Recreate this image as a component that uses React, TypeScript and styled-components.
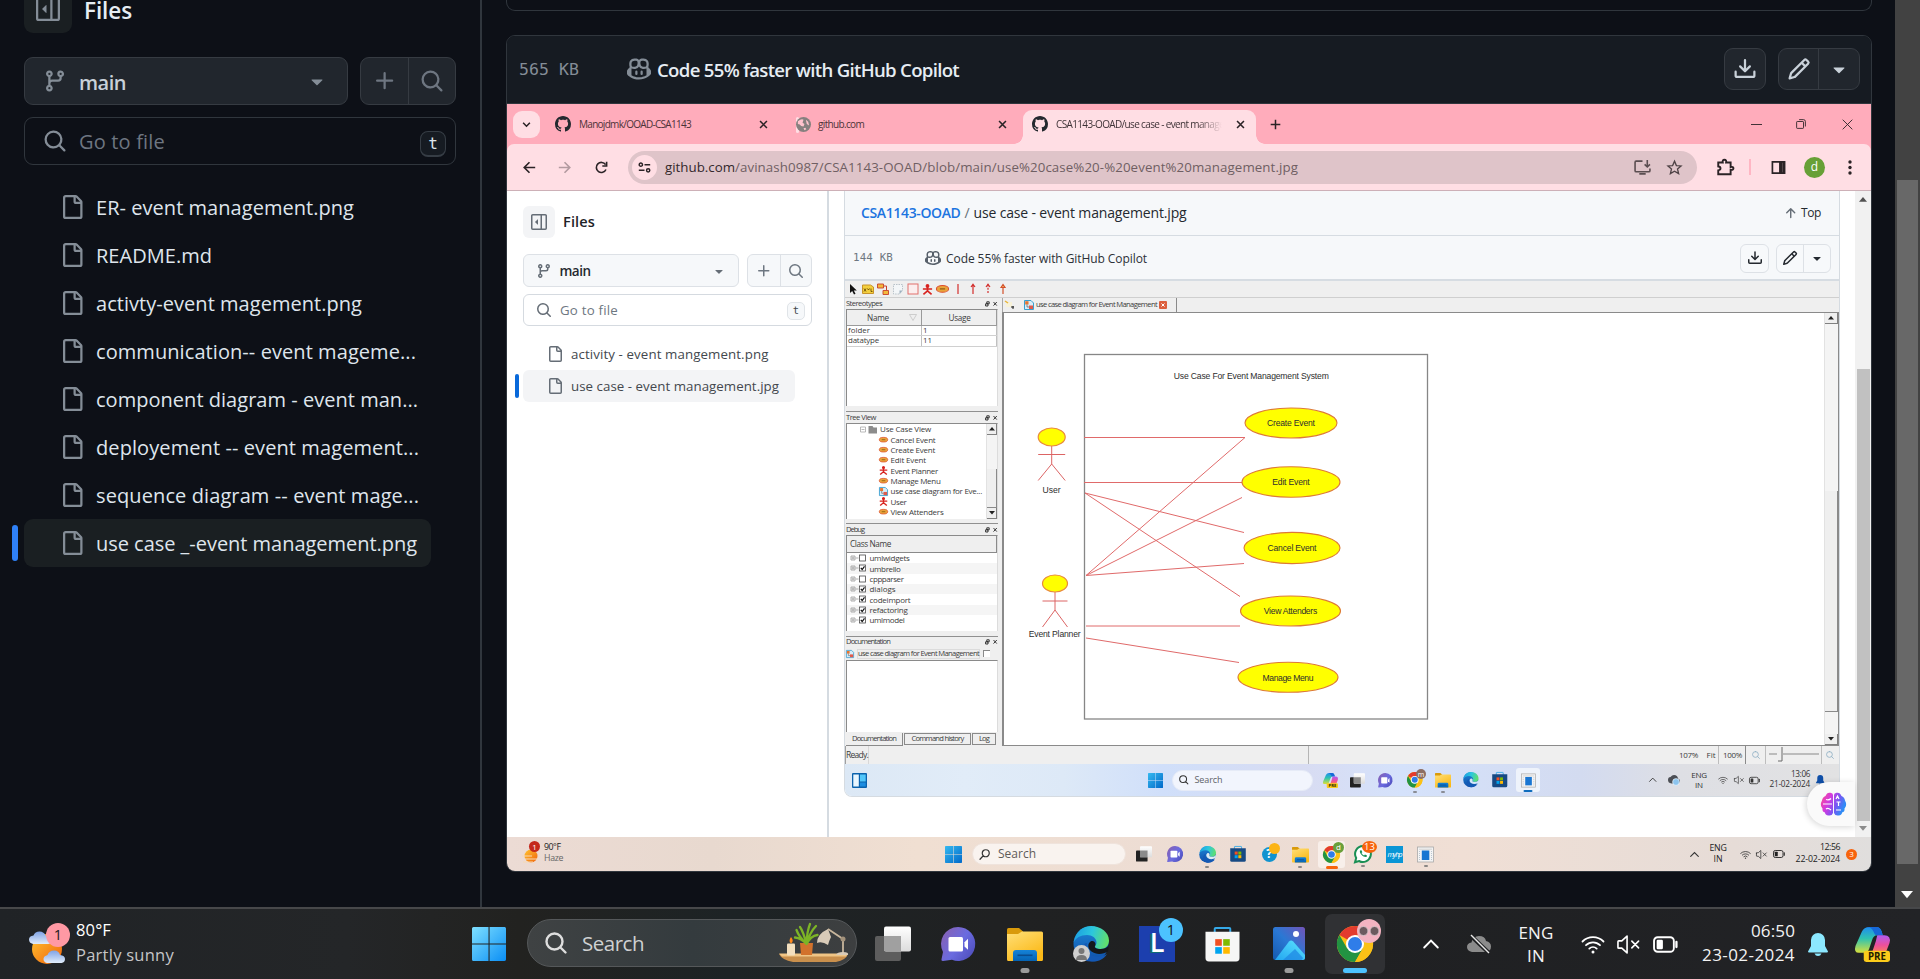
import React, { useLayoutEffect, useRef } from "react";
import styled, { createGlobalStyle, css } from "styled-components";

const UI = `"Open Sans", "Noto Sans", sans-serif`;
const MONO = `"DejaVu Sans Mono", "Liberation Mono", monospace`;

const Global = createGlobalStyle`
  *, *::before, *::after { box-sizing: border-box; }
  html, body { margin: 0; padding: 0; overflow: hidden; background: #0d1017; }
  body { font-family: ${UI}; }
  svg { display: block; flex: none; overflow: visible; }
`;

/* ---------- text ---------- */

interface TextProps { $s: number; $c?: string; $wt?: number; $f?: string; $pt?: number }
const Text = styled.span<TextProps>`
  display: inline-block;
  flex: none;
  white-space: pre;
  line-height: 1.2;
  padding-top: ${(p) => p.$pt || 0}px;
  font-family: ${(p) => p.$f || UI};
  font-size: ${(p) => p.$s}px;
  font-weight: ${(p) => p.$wt || 400};
  color: ${(p) => p.$c || "inherit"};
`;

/* A single line of text whose tracking is adjusted so that it spans w pixels. */
function Fit(props: { w: number; s: number; c?: string; wt?: number; f?: string; pt?: number; children: React.ReactNode }) {
  const ref = useRef<HTMLSpanElement>(null);
  useLayoutEffect(() => {
    const el = ref.current;
    if (!el) return;
    el.style.letterSpacing = "0px";
    const n = (el.textContent || "").length;
    const natural = el.getBoundingClientRect().width;
    if (n > 1) el.style.letterSpacing = `${(props.w - natural) / n}px`;
  });
  return (
    <Text ref={ref} $s={props.s} $c={props.c} $wt={props.wt} $f={props.f} $pt={props.pt}>{props.children}</Text>
  );
}

/* ---------- octicons ---------- */

const OCT: Record<string, string> = {
  file: "M2 1.75C2 .784 2.784 0 3.75 0h6.586c.464 0 .909.184 1.237.513l2.914 2.914c.329.328.513.773.513 1.237v9.586A1.75 1.75 0 0 1 13.25 16h-9.5A1.75 1.75 0 0 1 2 14.25Zm1.75-.25a.25.25 0 0 0-.25.25v12.5c0 .138.112.25.25.25h9.5a.25.25 0 0 0 .25-.25V6h-2.75A1.75 1.75 0 0 1 9 4.25V1.5Zm6.75.062V4.25c0 .138.112.25.25.25h2.688l-.011-.013-2.914-2.914-.013-.011Z",
  search: "M10.68 11.74a6 6 0 0 1-7.922-8.982 6 6 0 0 1 8.982 7.922l3.04 3.04a.749.749 0 0 1-.326 1.275.749.749 0 0 1-.734-.215ZM11.5 7a4.499 4.499 0 1 0-8.997 0A4.499 4.499 0 0 0 11.5 7Z",
  branch: "M9.5 3.25a2.25 2.25 0 1 1 3 2.122V6A2.5 2.5 0 0 1 10 8.5H6a1 1 0 0 0-1 1v1.128a2.251 2.251 0 1 1-1.5 0V5.372a2.25 2.25 0 1 1 1.5 0v1.836A2.493 2.493 0 0 1 6 7h4a1 1 0 0 0 1-1v-.628A2.25 2.25 0 0 1 9.5 3.25Zm-6 0a.75.75 0 1 0 1.5 0 .75.75 0 0 0-1.5 0Zm8.25-.75a.75.75 0 1 0 0 1.5.75.75 0 0 0 0-1.5ZM4.25 12a.75.75 0 1 0 0 1.5.75.75 0 0 0 0-1.5Z",
  plus: "M7.75 2a.75.75 0 0 1 .75.75V7h4.25a.75.75 0 0 1 0 1.5H8.5v4.25a.75.75 0 0 1-1.5 0V8.5H2.75a.75.75 0 0 1 0-1.5H7V2.75A.75.75 0 0 1 7.75 2Z",
  caret: "m4.427 7.427 3.396 3.396a.25.25 0 0 0 .354 0l3.396-3.396A.25.25 0 0 0 11.396 7H4.604a.25.25 0 0 0-.177.427Z",
  download: "M2.75 14A1.75 1.75 0 0 1 1 12.25v-2.5a.75.75 0 0 1 1.5 0v2.5c0 .138.112.25.25.25h10.5a.25.25 0 0 0 .25-.25v-2.5a.75.75 0 0 1 1.5 0v2.5A1.75 1.75 0 0 1 13.25 14ZM7.25 7.689V2a.75.75 0 0 1 1.5 0v5.689l1.97-1.969a.749.749 0 1 1 1.06 1.06l-3.25 3.25a.749.749 0 0 1-1.06 0L4.22 6.78a.749.749 0 1 1 1.06-1.06l1.97 1.969Z",
  pencil: "M11.013 1.427a1.75 1.75 0 0 1 2.474 0l1.086 1.086a1.75 1.75 0 0 1 0 2.474l-8.61 8.61c-.21.21-.47.364-.756.445l-3.251.93a.75.75 0 0 1-.927-.928l.929-3.25c.081-.286.235-.547.445-.758l8.61-8.61Zm.176 4.823L9.75 4.81l-6.286 6.287a.253.253 0 0 0-.064.108l-.558 1.953 1.953-.558a.253.253 0 0 0 .108-.064Zm1.238-3.763a.25.25 0 0 0-.354 0L10.811 3.75l1.439 1.44 1.263-1.263a.25.25 0 0 0 0-.354Z",
  copilot: "M7.998 15.035c-4.562 0-7.873-2.914-7.998-3.749V9.338c.085-.628.677-1.686 1.588-2.065.013-.07.024-.143.036-.218.029-.183.06-.384.126-.612-.201-.508-.254-1.084-.254-1.656 0-.87.128-1.769.693-2.484.579-.733 1.494-1.124 2.724-1.261 1.206-.134 2.262.034 2.944.765.05.053.096.108.139.165.044-.057.094-.112.143-.165.682-.731 1.738-.899 2.944-.765 1.23.137 2.145.528 2.724 1.261.566.715.693 1.614.693 2.484 0 .572-.053 1.148-.254 1.656.066.228.098.429.126.612.012.076.024.148.037.218.924.385 1.522 1.471 1.591 2.095v1.872c0 .766-3.351 3.795-8.002 3.795Zm0-1.485c2.28 0 4.584-1.11 5.002-1.433V7.862l-.023-.116c-.49.21-1.075.291-1.727.291-1.146 0-2.059-.327-2.71-.991A3.222 3.222 0 0 1 8 6.303a3.24 3.24 0 0 1-.544.743c-.65.664-1.563.991-2.71.991-.652 0-1.236-.081-1.727-.291l-.023.116v4.255c.419.323 2.722 1.433 5.002 1.433ZM6.762 2.83c-.193-.206-.637-.413-1.682-.297-1.019.113-1.479.404-1.713.7-.247.312-.369.789-.369 1.554 0 .793.129 1.171.308 1.371.162.181.519.379 1.442.379.853 0 1.339-.235 1.638-.54.315-.322.527-.827.617-1.553.117-.935-.037-1.395-.241-1.614Zm4.155-.297c-1.044-.116-1.488.091-1.681.297-.204.219-.359.679-.242 1.614.091.726.303 1.231.618 1.553.299.305.784.54 1.638.54.922 0 1.28-.198 1.442-.379.179-.2.308-.578.308-1.371 0-.765-.123-1.242-.37-1.554-.233-.296-.693-.587-1.713-.7ZM6.25 9.037a.75.75 0 0 1 .75.75v1.501a.75.75 0 0 1-1.5 0V9.787a.75.75 0 0 1 .75-.75Zm4.25.75v1.501a.75.75 0 0 1-1.5 0V9.787a.75.75 0 0 1 1.5 0Z",
  up: "M3.47 7.78a.75.75 0 0 1 0-1.06l4.25-4.25a.75.75 0 0 1 1.06 0l4.25 4.25a.751.751 0 0 1-.018 1.042.751.751 0 0 1-1.042.018L9 4.81v7.44a.75.75 0 0 1-1.5 0V4.81L4.53 7.78a.75.75 0 0 1-1.06 0Z",
  sidebar: "m4.177 7.823 2.396-2.396A.25.25 0 0 1 7 5.604v4.792a.25.25 0 0 1-.427.177L4.177 8.177a.25.25 0 0 1 0-.354ZM0 1.75C0 .784.784 0 1.75 0h12.5C15.216 0 16 .784 16 1.75v12.5A1.75 1.75 0 0 1 14.25 16H1.75A1.75 1.75 0 0 1 0 14.25Zm1.75-.25a.25.25 0 0 0-.25.25v12.5c0 .138.112.25.25.25H9.5v-13Zm12.5 13a.25.25 0 0 0 .25-.25V1.75a.25.25 0 0 0-.25-.25H11v13Z",
  github: "M8 0c4.42 0 8 3.58 8 8a8.013 8.013 0 0 1-5.45 7.59c-.4.08-.55-.17-.55-.38 0-.27.01-1.13.01-2.2 0-.75-.25-1.23-.54-1.48 1.78-.2 3.65-.88 3.65-3.95 0-.88-.31-1.59-.82-2.15.08-.2.36-1.02-.08-2.12 0 0-.67-.22-2.2.82-.64-.18-1.32-.27-2-.27-.68 0-1.36.09-2 .27-1.53-1.03-2.2-.82-2.2-.82-.44 1.1-.16 1.92-.08 2.12-.51.56-.82 1.28-.82 2.15 0 3.06 1.86 3.75 3.64 3.95-.23.2-.44.55-.51 1.07-.46.21-1.61.55-2.33-.66-.15-.24-.6-.83-1.23-.82-.67.01-.27.38.01.53.34.19.73.9.82 1.13.16.45.68 1.31 2.69.94 0 .67.01 1.3.01 1.49 0 .21-.15.45-.55.38A7.995 7.995 0 0 1 0 8c0-4.42 3.58-8 8-8Z",
};
const Oct = ({ n, s, c }: { n: string; s: number; c: string }) => (
  <svg width={s} height={s} viewBox="0 0 16 16" fill={c}><path d={OCT[n]} /></svg>
);

/* ---------- application icons ---------- */

interface IconProps { s: number }

const Defs = styled.svg`position: absolute;`;
const GradientDefs = () => (
  <Defs width="0" height="0">
    <defs>
      <linearGradient id="gWin" x1="0" y1="0" x2="1" y2="1"><stop offset="0" stopColor="#7fe0ff" /><stop offset="1" stopColor="#0a8ef5" /></linearGradient>
      <linearGradient id="gWinDark" x1="0" y1="0" x2="1" y2="1"><stop offset="0" stopColor="#35b9f0" /><stop offset="1" stopColor="#0169c9" /></linearGradient>
      <linearGradient id="gTeams" x1="0" y1="0.2" x2="1" y2="0.9"><stop offset="0" stopColor="#8661b5" /><stop offset=".5" stopColor="#6a6be0" /><stop offset="1" stopColor="#4c4bb8" /></linearGradient>
      <linearGradient id="gFolder" x1="0" y1="0" x2="0.6" y2="1"><stop offset="0" stopColor="#ffdf78" /><stop offset="1" stopColor="#fbb917" /></linearGradient>
      <linearGradient id="gFolderB" x1="0" y1="0" x2="0" y2="1"><stop offset="0" stopColor="#1583d8" /><stop offset="1" stopColor="#0563b4" /></linearGradient>
      <linearGradient id="gEdgeA" x1="0" y1="0.3" x2="1" y2="0.5"><stop offset="0" stopColor="#1b9de2" /><stop offset=".5" stopColor="#2cc7dd" /><stop offset="1" stopColor="#62e06a" /></linearGradient>
      <linearGradient id="gEdgeB" x1="0" y1="0" x2="0" y2="1"><stop offset="0" stopColor="#1d86d8" /><stop offset="1" stopColor="#0f4fa8" /></linearGradient>
      <linearGradient id="gPhoto" x1="0" y1="1" x2="1" y2="0"><stop offset="0" stopColor="#1559ad" /><stop offset=".5" stopColor="#2a78d4" /><stop offset="1" stopColor="#7254b8" /></linearGradient>
      <linearGradient id="gPhotoB" x1="0" y1="1" x2="1" y2="0"><stop offset="0" stopColor="#23a5f0" /><stop offset="1" stopColor="#5be3ff" /></linearGradient>
      <linearGradient id="gCopA" x1="0" y1="0" x2="0" y2="1"><stop offset="0" stopColor="#1f8df0" /><stop offset=".45" stopColor="#2fc3b0" /><stop offset="1" stopColor="#d8e03c" /></linearGradient>
      <linearGradient id="gCopB" x1="0" y1="0" x2="0" y2="1"><stop offset="0" stopColor="#b05cf2" /><stop offset=".5" stopColor="#ec4f9c" /><stop offset="1" stopColor="#ff8a4a" /></linearGradient>
      <linearGradient id="gBrain" x1="0" y1="0" x2="1" y2="0.4"><stop offset="0" stopColor="#ff4f8c" /><stop offset=".4" stopColor="#d23be0" /><stop offset=".7" stopColor="#7a55f2" /><stop offset="1" stopColor="#2f8cf5" /></linearGradient>
      <linearGradient id="gSun" x1="0" y1="0" x2="1" y2="1"><stop offset="0" stopColor="#ffc430" /><stop offset="1" stopColor="#f0620c" /></linearGradient>
      <linearGradient id="gCloud" x1="0" y1="0" x2="0" y2="1"><stop offset="0" stopColor="#7fa3e6" /><stop offset="1" stopColor="#e0ecfa" /></linearGradient>
      <linearGradient id="gTvFront" x1="0" y1="0" x2="0" y2="1"><stop offset="0" stopColor="#ffffff" /><stop offset="1" stopColor="#dcdcdc" /></linearGradient>
    </defs>
  </Defs>
);

const WinLogo = ({ s, dark }: IconProps & { dark?: boolean }) => (
  <svg width={s} height={s} viewBox="0 0 34 34">
    <path fill={dark ? "url(#gWinDark)" : "url(#gWin)"} d="M1.5 0h15v16.5H0v-15Q0 0 1.5 0ZM17.6 0h15Q34 0 34 1.5v15H17.600ZM0 17.600h16.500V34h-15Q0 34 0 32.500ZM17.600 17.600H34v15Q34 34 32.500 34H17.600Z" />
  </svg>
);
const TaskViewIcon = ({ s, dark }: IconProps & { dark?: boolean }) => (
  <svg width={s} height={s} viewBox="0 0 36 36">
    <rect x="0" y="10" width="26" height="25" rx="2" fill={dark ? "#222" : "#5d5d5d"} />
    <rect x="9" y="0.500" width="27" height="25" rx="2" fill="url(#gTvFront)" />
    <path d="M9 10h17v15.500H11q-2 0-2-2Z" fill={dark ? "#8b8b8b" : "#a0a0a0"} />
  </svg>
);
const TeamsIcon = ({ s }: IconProps) => (
  <svg width={s} height={s} viewBox="0 0 34 34">
    <path d="M17 0a17 17 0 1 1-6 32.800L2 34q-2 .2-1.500-1.800L2 25A17 17 0 0 1 17 0Z" fill="url(#gTeams)" />
    <rect x="7.500" y="10" width="14.500" height="14.500" rx="1.500" fill="#fff" />
    <path d="M23.500 15.200 27 11.800v11l-3.500-3.400Z" fill="#fff" />
  </svg>
);
const FolderIcon = ({ s }: IconProps) => (
  <svg width={s} height={s} viewBox="0 0 36 36">
    <path d="M0 3.500Q0 2 1.500 2H12l4 3.500V12H0Z" fill="#d99a0b" />
    <path d="M0 8h11l4-2.500h19.500q1.500 0 1.500 1.500v26.500q0 1.500-1.500 1.500h-33Q0 35 0 33.500Z" fill="url(#gFolder)" />
    <path d="M6 35V27q0-3 3-3h18q3 0 3 3v8Z" fill="url(#gFolderB)" />
    <rect x="10.500" y="28.500" width="15" height="1.600" fill="#0a4c8e" />
  </svg>
);
const EdgeIcon = ({ s, hole = "#15181c" }: IconProps & { hole?: string }) => (
  <svg width={s} height={s} viewBox="0 0 36 36">
    <circle cx="18" cy="18" r="17.500" fill="url(#gEdgeB)" />
    <path d="M.6 16.500C2.500 5 10 0 18 0c10 0 18 6.500 18 14.500 0 5-4 8.500-8.500 8.500-3.500 0-5.500-1.300-5.500-2.500 0-1.400 1.500-1.600 1.500-4C23.500 12 19 9 14 9 7.500 9 2.500 12 .6 16.500Z" fill="url(#gEdgeA)" />
    <path d="M14 17c-2 7 2.500 13.500 11 13.500 4 0 6.500-1 9-2.500C31 33 25 36 19 35.500 10 34.500 7.500 25 10 20c1-2 2.500-3 4-3Z" fill="#1459b5" />
    <path d="M17.500 15.500c-3 2-3 7 1 10 4.500 3.500 11.500 3 16.500 0l1 -7c-1.500 3-4.500 4.500-8.500 4.500-4.500 0-6.300-1.500-5.500-2.700 1.500-2.200-.5-6.800-4.500-4.800Z" fill={hole} />
  </svg>
);
const StoreIcon = ({ s, dark }: IconProps & { dark?: boolean }) => (
  <svg width={s} height={s} viewBox="0 0 36 36">
    <path d="M10 7V1.800Q10 1 11 1h14q1 0 1 .8V7" fill="none" stroke="#35a9e8" strokeWidth="2" />
    <path d="M.5 5h35v27q0 3.500-3.500 3.500H4Q.5 35.500.5 32Z" fill={dark ? "#174a84" : "#f6f6f6"} />
    <path fill="#f25022" d="M10.500 12.500h6.800v6.800h-6.800z" />
    <path fill="#7fba00" d="M18.700 12.500h6.800v6.800h-6.800z" />
    <path fill="#00a4ef" d="M10.500 20.700h6.800v6.800h-6.800z" />
    <path fill="#ffb900" d="M18.700 20.700h6.800v6.800h-6.800z" />
  </svg>
);
const ChromeIcon = ({ s }: IconProps) => (
  <svg width={s} height={s} viewBox="0 0 36 36">
    <circle cx="18" cy="18" r="18" fill="#fbc116" />
    <path d="M18 18 2.400 9A18 18 0 0 1 33.600 9Z" fill="#e33b2e" />
    <path d="M2.400 9A18 18 0 0 0 18 36l7.800-13.500L10.200 22.500Z" fill="#229342" />
    <path d="M18 9h15.600A18 18 0 0 1 18 36l7.800-13.500Z" fill="#fbc116" />
    <circle cx="18" cy="18" r="9" fill="#fff" />
    <circle cx="18" cy="18" r="7" fill="#2f7de9" />
  </svg>
);
const CopilotIcon = ({ s }: IconProps) => (
  <svg width={s} height={s} viewBox="0 0 36 36">
    <path d="M7 5q2-5 8-5h7q4 0 5.500 5l1 3.500h-5.500q-4 0-5.500 5l-3 9q-1.500 4-6 4H4q-5.500 0-3.500-7Z" fill="url(#gCopA)" />
    <path d="M12 0h10q4 0 5.500 5l1 3.500h-6q-2 0-3.500-4Q17 0 12 0Z" fill="#1768d8" />
    <path d="M23 8.500h7q7.500 0 5.500 8l-3.500 9q-1.500 3-5 3H14q3 0 4.500-5l3-9q1-5 1.500-6Z" fill="url(#gCopB)" />
    <rect x="9" y="24.500" width="27" height="11.500" rx="2.500" fill="#fccc1b" />
    <text x="22.500" y="33.800" fontFamily="Open Sans, sans-serif" fontWeight="700" fontSize="10" textAnchor="middle" fill="#231b00">PRE</text>
  </svg>
);
const PhotosIcon = () => (
  <svg width="32" height="34" viewBox="0 0 32 34">
    <rect width="32" height="33" rx="2.500" fill="url(#gPhoto)" />
    <path d="M2 33 16 14.500q2-2 4.200 0L32 28v2.500q0 2.500-2.500 2.500Z" fill="url(#gPhotoB)" />
    <path d="M10 33 22 22l8 9q-.5 2-2 2Z" fill="#1d84e2" opacity=".7" />
    <circle cx="23" cy="7" r="3" fill="#fff" />
  </svg>
);
const WindowIcon = ({ s }: IconProps) => (
  <svg width={s} height={s} viewBox="0 0 17 17">
    <rect x=".5" y="1" width="16" height="15" fill="#f4f4f4" stroke="#a9a9a9" strokeWidth=".8" />
    <rect x="2" y="2.500" width="13" height="1.500" fill="#ddd" />
    <rect x="4.800" y="4.500" width="7.500" height="9.500" fill="#1976d2" />
    <path d="M2.500 5v9M14.500 5v9" stroke="#b9c4cf" strokeDasharray="1 1" />
  </svg>
);
const WidgetIcon = ({ s }: IconProps) => (
  <svg width={s} height={s} viewBox="0 0 15 15">
    <rect width="15" height="15" rx="1" fill="#0a62ad" />
    <rect x="1.300" y="1.500" width="5.500" height="12" fill="#e8f6ff" />
    <rect x="8" y="1.500" width="5.700" height="7" fill="#52c7fa" />
    <rect x="8" y="9.500" width="5.700" height="4" fill="#1d8de0" />
  </svg>
);
const WifiIcon = ({ s, c }: IconProps & { c: string }) => (
  <svg width={s} height={s} viewBox="0 0 24 24" fill="none" stroke={c} strokeWidth="1.800" strokeLinecap="round">
    <path d="M1.500 9.500a15 15 0 0 1 21 0M5 13.200a10 10 0 0 1 14 0M8.300 16.600a5.400 5.400 0 0 1 7.400 0" />
    <circle cx="12" cy="20" r="1.500" fill={c} stroke="none" />
  </svg>
);
const SpeakerIcon = ({ s, c }: IconProps & { c: string }) => (
  <svg width={s} height={s} viewBox="0 0 24 24" fill="none" stroke={c} strokeWidth="1.700" strokeLinejoin="round" strokeLinecap="round">
    <path d="M1 9v6q0 .8.8.8H5l5.500 5V3.200L5 8.200H1.800Q1 8.200 1 9ZM15.500 8.500l7 7M22.500 8.500l-7 7" />
  </svg>
);
const BatteryIcon = ({ s, c }: IconProps & { c: string }) => (
  <svg width={s} height={s} viewBox="0 0 24 24" fill="none">
    <rect x="1" y="5" width="19" height="14" rx="3.500" stroke={c} strokeWidth="1.800" />
    <rect x="3.500" y="7.500" width="6" height="9" rx="1.200" fill={c} />
    <path d="M22.500 9.500v5" stroke={c} strokeWidth="2.200" strokeLinecap="round" />
  </svg>
);
const ChevronUp = ({ s, c }: IconProps & { c: string }) => (
  <svg width={s} height={s} viewBox="0 0 16 16" fill="none" stroke={c} strokeWidth="1.900" strokeLinecap="round"><path d="m1.200 11.500 6.800-7 6.800 7" /></svg>
);
const BellIcon = ({ w, c }: { w: number; c: string }) => (
  <svg width={w} height={w * 1.15} viewBox="0 0 20 23" fill={c}>
    <path d="M10 0a7 7 0 0 1 7 7v6l3 5.500q0 1-1 1H1q-1 0-1-1L3 13V7a7 7 0 0 1 7-7ZM6.500 20.500h7Q12.500 23 10 23t-3.500-2.500Z" />
  </svg>
);
const PillSearch = ({ s, c, flip }: IconProps & { c: string; flip?: boolean }) => (
  <svg width={s} height={s} viewBox="0 0 22 22" fill="none" stroke={c} strokeWidth="2.400" strokeLinecap="round">
    {flip ? <path d="M13.500 1.500a7 7 0 1 1 0 14 7 7 0 0 1 0-14ZM8.500 13.500 2 20.500" /> : <path d="M9.500 1.500a8 8 0 1 1 0 16 8 8 0 0 1 0-16ZM15.500 15.500l5 5" />}
  </svg>
);

/* ---------- page scaffolding ---------- */

const Page = styled.div`
  width: 1920px;
  height: 979px;
  display: flex;
  flex-direction: column;
  overflow: hidden;
  background: #0d1017;
`;
const Upper = styled.div`
  height: 907px;
  display: flex;
  overflow: hidden;
`;

/* ---------- file navigator, shared by both themes ---------- */

interface NavTheme {
  k: number; fg: string; title: string; muted: string; faint: string; btn: string; border: string;
  inputBorder: string; chip: string; accent: string; branch: string; item: string; kbd: string; kbdBorder: string;
}
const darkNav: NavTheme = {
  k: 1.5, fg: "#c9d1d9", title: "#e6edf3", muted: "#848d97", faint: "#6e7681", btn: "#21262d", border: "#363b42",
  inputBorder: "#30363d", chip: "#1a1f22", accent: "#2f81f7", branch: "#c9d1d9", item: "#dfe5ec", kbd: "#161b22", kbdBorder: "#363d45",
};
const lightNav: NavTheme = {
  k: 1, fg: "#24292f", title: "#1f2328", muted: "#656d76", faint: "#6e7781", btn: "#f6f8fa", border: "#dde1e6",
  inputBorder: "#d5dae0", chip: "#f3f4f6", accent: "#0969da", branch: "#24292f", item: "#43484e", kbd: "#f6f8fa", kbdBorder: "#e0e4e8",
};

const DarkSidebar = styled.aside`
  width: 482px;
  flex: none;
  border-right: 2px solid #30363d;
  padding-left: 24px;
`;
const LightSidebar = styled.aside`
  width: 322px;
  flex: none;
  background: #fff;
  border-right: 2px solid #d5dbe1;
  padding: 15px 0 0 16px;
`;
const NavHead = styled.div<{ $t: NavTheme }>`
  display: flex;
  align-items: center;
  gap: ${(p) => (p.$t.k === 1 ? 8 : 12)}px;
  height: ${(p) => 32 * p.$t.k}px;
`;
const Shifted = styled.div`margin-top: -15px;`;
const Chip = styled.div<{ $t: NavTheme }>`
  width: ${(p) => 32 * p.$t.k}px;
  height: ${(p) => 32 * p.$t.k}px;
  border-radius: ${(p) => 6 * p.$t.k}px;
  background: ${(p) => p.$t.chip};
  display: flex;
  align-items: center;
  justify-content: center;
`;
const NavControls = styled.div<{ $t: NavTheme }>`
  display: flex;
  gap: ${(p) => 8 * p.$t.k}px;
  margin-top: ${(p) => (p.$t.k === 1 ? 16 : 24)}px;
`;
const BranchBtn = styled.div<{ $t: NavTheme }>`
  width: ${(p) => 216 * p.$t.k}px;
  height: ${(p) => (p.$t.k === 1 ? 33 : 48)}px;
  border: 1px solid ${(p) => p.$t.border};
  border-radius: ${(p) => 6 * p.$t.k}px;
  background: ${(p) => p.$t.btn};
  display: flex;
  align-items: center;
  padding: 0 ${(p) => (p.$t.k === 1 ? 11 : 18)}px 0 ${(p) => (p.$t.k === 1 ? 11.5 : 18)}px;
  svg + span { margin-left: ${(p) => (p.$t.k === 1 ? 8 : 12)}px; margin-right: auto; }
`;
const BtnGroup = styled.div<{ $bg: string; $b: string; $r: number; $h: number }>`
  display: flex;
  height: ${(p) => p.$h}px;
  border: 1px solid ${(p) => p.$b};
  border-radius: ${(p) => p.$r}px;
  background: ${(p) => p.$bg};
`;
const BtnPart = styled.div<{ $w: number; $b?: string }>`
  width: ${(p) => p.$w}px;
  display: flex;
  align-items: center;
  justify-content: center;
  ${(p) => p.$b && css`border-right: 1px solid ${p.$b};`}
`;
const FileInput = styled.div<{ $t: NavTheme }>`
  width: ${(p) => (p.$t.k === 1 ? 289 : 432)}px;
  height: ${(p) => (p.$t.k === 1 ? 32 : 48)}px;
  margin-top: ${(p) => (p.$t.k === 1 ? 7 : 12)}px;
  border: 1px solid ${(p) => p.$t.inputBorder};
  border-radius: ${(p) => 6 * p.$t.k}px;
  display: flex;
  align-items: center;
  padding: 0 ${(p) => (p.$t.k === 1 ? 6 : 9)}px 0 ${(p) => (p.$t.k === 1 ? 12 : 18)}px;
  svg + span { margin-left: ${(p) => (p.$t.k === 1 ? 8 : 12)}px; margin-right: auto; }
`;
const Kbd = styled.span<{ $t: NavTheme }>`
  width: ${(p) => (p.$t.k === 1 ? 18 : 26)}px;
  height: ${(p) => (p.$t.k === 1 ? 18 : 26)}px;
  margin-top: ${(p) => (p.$t.k === 1 ? 1 : 6)}px;
  border: 1px solid ${(p) => p.$t.kbdBorder};
  border-bottom-width: ${(p) => (p.$t.k === 1 ? 1 : 2)}px;
  border-radius: ${(p) => (p.$t.k === 1 ? 5 : 8)}px;
  background: ${(p) => p.$t.kbd};
  display: flex;
  align-items: center;
  justify-content: center;
  font: ${(p) => (p.$t.k === 1 ? 10.5 : 16)}px/1 ${MONO};
  color: ${(p) => p.$t.item};
`;
const FileList = styled.div<{ $t: NavTheme }>`margin-top: ${(p) => (p.$t.k === 1 ? 12 : 18)}px;`;
const FileRow = styled.div<{ $t: NavTheme; $sel?: boolean }>`
  position: relative;
  width: ${(p) => (p.$t.k === 1 ? 272 : 407)}px;
  height: ${(p) => 32 * p.$t.k}px;
  border-radius: ${(p) => 6 * p.$t.k}px;
  background: ${(p) => (p.$sel ? p.$t.chip : "transparent")};
  display: flex;
  align-items: center;
  gap: ${(p) => (p.$t.k === 1 ? 8 : 12)}px;
  padding-left: ${(p) => (p.$t.k === 1 ? 24 : 36)}px;
  ${(p) => p.$sel && css`
    &::before {
      content: "";
      position: absolute;
      left: ${-8 * p.$t.k}px;
      top: ${4 * p.$t.k}px;
      bottom: ${4 * p.$t.k}px;
      width: ${4 * p.$t.k}px;
      border-radius: 3px;
      background: ${p.$t.accent};
    }
  `}
`;

function Navigator({ t, files }: { t: NavTheme; files: [string, number][] }) {
  const dark = t.k !== 1;
  return (
    <>
      <NavHead $t={t}>
        <Chip $t={t}><Oct n="sidebar" s={dark ? 24 : 16} c={t.muted} /></Chip>
        <Fit s={dark ? 22.5 : 14.500} w={dark ? 48 : 32} wt={600} c={t.title} pt={dark ? 3 : 0}>Files</Fit>
      </NavHead>
      <NavControls $t={t}>
        <BranchBtn $t={t}>
          <Oct n="branch" s={dark ? 24 : 16} c={t.muted} />
          <Fit s={dark ? 20 : 13.500} w={dark ? 47 : 31} wt={600} c={t.branch} pt={dark ? 3 : 1}>main</Fit>
          <Oct n="caret" s={dark ? 24 : 16} c={t.muted} />
        </BranchBtn>
        <BtnGroup $bg={t.btn} $b={t.border} $r={6 * t.k} $h={dark ? 48 : 33}>
          <BtnPart $w={dark ? 48 : 33} $b={t.border}><Oct n="plus" s={dark ? 24 : 16} c={t.faint} /></BtnPart>
          <BtnPart $w={dark ? 46 : 30}><Oct n="search" s={dark ? 24 : 16} c={t.faint} /></BtnPart>
        </BtnGroup>
      </NavControls>
      <FileInput $t={t}>
        <Oct n="search" s={dark ? 24 : 16} c={t.muted} />
        <Fit s={dark ? 20 : 13.300} w={dark ? 86 : 58} c={t.faint} pt={2}>Go to file</Fit>
        <Kbd $t={t}>t</Kbd>
      </FileInput>
      <FileList $t={t}>
        {files.map(([name, w], i) => (
          <FileRow key={name} $t={t} $sel={i === files.length - 1}>
            <Oct n="file" s={dark ? 24 : 16} c={t.muted} />
            <Fit s={dark ? 20 : 13.300} w={w} c={t.item} pt={2}>{name}</Fit>
          </FileRow>
        ))}
      </FileList>
    </>
  );
}

/* ---------- dark file viewer ---------- */

const Viewer = styled.main`
  width: 1413px;
  flex: none;
  padding-left: 24px;
`;
const PrevBox = styled.div`
  width: 1366px;
  height: 11px;
  border: 1px solid #30363d;
  border-top: 0;
  border-radius: 0 0 9px 9px;
`;
const BlobBox = styled.div`
  width: 1366px;
  margin-top: 24px;
  border: 1px solid #30363d;
  border-radius: 9px;
  overflow: hidden;
`;
const BlobHeader = styled.div`
  height: 68px;
  display: flex;
  align-items: center;
  padding: 0 11px 2px 12px;
  background: #161b22;
  border-bottom: 1px solid #30363d;
`;
const Group = styled.div<{ $ml?: number; $gap?: number }>`
  display: flex;
  align-items: center;
  gap: ${(p) => p.$gap || 0}px;
  margin-left: ${(p) => (p.$ml === undefined ? "auto" : p.$ml + "px")};
`;

/* ---------- pink browser window ---------- */

const TabStrip = styled.div`
  height: 40px;
  display: flex;
  align-items: flex-end;
  background: #ffacbb;
  color: #2b1f22;
`;
const TabCell = styled.div<{ $w: number; $ml?: number }>`
  width: ${(p) => p.$w}px;
  height: 34px;
  margin-left: ${(p) => p.$ml || 0}px;
  padding-bottom: 6px;
  display: flex;
  align-items: center;
  flex: none;
`;
const TabMenu = styled.div`
  width: 27px;
  height: 27px;
  border-radius: 9px;
  background: #ffdee4;
  display: flex;
  align-items: center;
  justify-content: center;
`;
const ActiveTab = styled(TabCell)`
  position: relative;
  background: #ffdee4;
  border-radius: 9px 9px 0 0;
  padding-left: 9px;
  &::before, &::after {
    content: "";
    position: absolute;
    bottom: 0;
    width: 9px;
    height: 9px;
  }
  &::before { left: -9px; background: radial-gradient(circle at 0 0, transparent 8.5px, #ffdee4 9px); }
  &::after { right: -9px; background: radial-gradient(circle at 100% 0, transparent 8.5px, #ffdee4 9px); }
`;
const Fade = styled.div<{ $w: number; $ml: number }>`
  width: ${(p) => p.$w}px;
  height: 16px;
  display: flex;
  align-items: center;
  margin-left: ${(p) => p.$ml}px;
  margin-right: auto;
  overflow: hidden;
  mask-image: linear-gradient(90deg, #000 85%, transparent);
`;
const TabRule = styled.div`
  width: 3px;
  height: 16px;
  margin: 0 10px 11px 14px;
  border-radius: 2px;
  background: #ffdee4;
`;
const AddressWrap = styled.div`background: #ffacbb;`;
const AddressRow = styled.div`
  height: 47px;
  display: flex;
  align-items: center;
  background: #ffdee4;
  border-bottom: 1.5px solid #cdb0b7;
  border-radius: 7px 7px 0 0;
  padding-left: 15px;
`;
const Spot = styled.div<{ $w: number; $ml?: number }>`
  position: relative;
  width: ${(p) => p.$w}px;
  margin-left: ${(p) => p.$ml || 0}px;
  flex: none;
  display: flex;
  align-items: center;
  justify-content: center;
`;
const UrlBar = styled.div`
  width: 1069px;
  height: 33px;
  flex: none;
  margin-left: 20px;
  border-radius: 17px;
  background: #dfc4c9;
  display: flex;
  align-items: center;
  padding: 0 15px 0 4px;
`;
const Disc = styled.div<{ $d: number; $bg: string; $fs?: number; $c?: string }>`
  width: ${(p) => p.$d}px;
  height: ${(p) => p.$d}px;
  flex: none;
  border-radius: 50%;
  background: ${(p) => p.$bg};
  color: ${(p) => p.$c || "#fff"};
  font-size: ${(p) => p.$fs || 10}px;
  line-height: 1;
  display: flex;
  align-items: center;
  justify-content: center;
`;
const Stroke = ({ w, h = w, d, c = "#2b2326", sw = 1.8, fill = "none", vb = "0 0 16 16" }: { w: number; h?: number; d: string; c?: string; sw?: number; fill?: string; vb?: string }) => (
  <svg width={w} height={h} viewBox={vb} fill={fill} stroke={c} strokeWidth={sw}><path d={d} /></svg>
);
const Globe = () => (
  <svg width="15" height="15" viewBox="0 0 16 16"><circle cx="8" cy="8" r="8" fill="#87807f" /><path d="M2 4.500q4-3 6-1.500L7 6l2 1.500-1 2.500-2.500-.5L4 8 2 7.500ZM10.500 3l2.500 2 1 4-2.500-1.500ZM8 12l2-.5 1 1.500-2 1Z" fill="#ffc3cd" /></svg>
);
const BrowserBody = styled.div`
  height: 646px;
  display: flex;
  background: #fff;
`;
const LightViewer = styled.section`
  width: 996px;
  margin-left: 15px;
  height: 606px;
  border: solid #d5dbe1;
  border-width: 0 1px 1px;
  border-radius: 0 0 8px 8px;
  overflow: hidden;
  flex: none;
`;
const LightBar = styled.div<{ $h: number; $b: number; $pl: number }>`
  height: ${(p) => p.$h}px;
  border-bottom: ${(p) => p.$b}px solid #d6dce2;
  background: #f6f8fa;
  display: flex;
  align-items: center;
  padding: 1px 8px 0 ${(p) => p.$pl}px;
`;
const LightScroll = styled.div`
  position: relative;
  width: 16px;
  margin-left: auto;
  background: #f1f1f1;
  display: flex;
  flex-direction: column;
  align-items: center;
  padding-top: 6px;
`;
const LightThumb = styled.div`
  width: 13px;
  height: 452px;
  margin: 167px 0 5px;
  background: #c1c1c1;
`;
const Assistant = styled.div`
  position: absolute;
  right: 16px;
  top: 591px;
  width: 48px;
  height: 44px;
  padding-left: 4px;
  border-radius: 22px 0 0 22px;
  background: #fafafa;
  box-shadow: -1px 1px 6px rgba(0, 0, 0, 0.16);
  display: flex;
  align-items: center;
  justify-content: center;
`;

/* ---------- UML modeller ---------- */

const Modeller = styled.div`
  background: #efefef;
  height: 483px;
  color: #3c3c3c;
`;
const ToolRow = styled.div`
  height: 17px;
  display: flex;
  align-items: center;
  gap: 3px;
  padding-left: 2px;
  border-bottom: 1px solid #cfcfcf;
`;
const ModelBody = styled.div`height: 448px; display: flex;`;
const Dock = styled.div`
  width: 157px;
  flex: none;
  padding: 0 4px 0 1px;
`;
const DockTitle = styled.div<{ $h: number; $line?: boolean }>`
  height: ${(p) => p.$h}px;
  display: flex;
  align-items: center;
  gap: 4px;
  padding-right: 1px;
  ${(p) => p.$line && css`border-top: 1.5px solid #909090;`}
  span { margin-right: auto; }
`;
const Panel = styled.div<{ $h: number; $mb?: number }>`
  height: ${(p) => p.$h}px;
  margin-bottom: ${(p) => p.$mb || 0}px;
  background: #fff;
  border: solid #8a8a8a;
  border-width: 1.5px 1px 0 1px;
  border-right-color: #dcdcdc;
  overflow: hidden;
`;
const GridRow = styled.div<{ $h: number; $head?: boolean }>`
  height: ${(p) => p.$h}px;
  display: grid;
  grid-template-columns: 75px 1fr;
  border-bottom: 1px solid ${(p) => (p.$head ? "#9a9a9a" : "#d0d0d0")};
  background: ${(p) => (p.$head ? "#efefef" : "#fff")};
  > div {
    display: flex;
    align-items: center;
    padding-left: 1px;
    justify-content: ${(p) => (p.$head ? "center" : "flex-start")};
    border-right: 1px solid ${(p) => (p.$head ? "#9a9a9a" : "#c0c0c0")};
  }
`;
const NameCell = styled.div`
  gap: 20px;
  && { justify-content: flex-end; padding-right: 4px; }
`;
const TreeWrap = styled.div`display: flex; height: 100%;`;
const TreeRows = styled.div`flex: 1; padding-top: 0;`;
const TreeRow = styled.div<{ $in: number; $alt?: boolean }>`
  height: 10.330px;
  display: flex;
  align-items: center;
  gap: 3px;
  padding-left: ${(p) => p.$in}px;
  background: ${(p) => (p.$alt ? "#f5f5f5" : "transparent")};
`;
const MiniScroll = styled.div<{ $w: number }>`
  width: ${(p) => p.$w}px;
  flex: none;
  display: flex;
  flex-direction: column;
  background: #f4f4f4;
  border-left: 1px solid #e2e2e2;
`;
const ScrollBtn = styled.div`
  height: 11px;
  flex: none;
  background: #efefef;
  border: solid #808080;
  border-width: 0 1px 1px 0;
  display: flex;
  align-items: center;
  justify-content: center;
`;
const ScrollHandle = styled.div<{ $top: number; $bottom: number }>`
  flex: 1;
  margin: ${(p) => p.$top}px 0 ${(p) => p.$bottom}px;
  background: #efefef;
  border: solid #8a8a8a;
  border-width: 0 1px 1px 0;
`;
const HeadCell = styled.div`
  height: 17px;
  display: flex;
  align-items: center;
  padding-left: 3px;
  background: #efefef;
  border: solid #8a8a8a;
  border-width: 0 1px 1px 0;
`;
const DocRow = styled.div`height: 13px; display: flex; align-items: center; gap: 3px;`;
const DocName = styled.div`border: 1px solid #dcdcdc; display: flex; align-items: center; height: 10px;`;
const Box = styled.div<{ $w: number; $h: number }>`
  width: ${(p) => p.$w}px;
  height: ${(p) => p.$h}px;
  background: #fff;
  border: 1px solid #8a8a8a;
  border-width: 1px 0 0 1px;
`;
const DockTabs = styled.div`height: 13px; display: flex; gap: 1px; margin-top: 1px;`;
const DockTab = styled.div<{ $w: number; $on?: boolean }>`
  width: ${(p) => p.$w}px;
  height: ${(p) => (p.$on ? 13 : 12)}px;
  border: solid #8a8a8a;
  border-width: ${(p) => (p.$on ? "0 1px 1px 0" : "1px 1px 1px 1px")};
  display: flex;
  align-items: center;
  justify-content: center;
`;
const Work = styled.div`width: 837px; flex: none; display: flex; flex-direction: column;`;
const WorkTabs = styled.div`height: 14px; display: flex; align-items: center; border-left: 1px solid #a8a8a8;`;
const WorkTab = styled.div`
  width: 153px;
  height: 14px;
  margin-left: 7px;
  display: flex;
  align-items: center;
  gap: 2px;
  border-right: 1.5px solid #8a8a8a;
`;
const CanvasRow = styled.div`
  height: 434px;
  display: flex;
  background: #fff;
  border: solid #8a8a8a;
  border-width: 1.5px 1px 1.5px 2px;
`;
const StatusRow = styled.div`height: 18px; display: flex; align-items: stretch;`;
const StatusCell = styled.div<{ $w: number; $l?: string; $r?: string }>`
  width: ${(p) => p.$w}px;
  flex: none;
  display: flex;
  align-items: center;
  justify-content: center;
  border-left: 1px solid ${(p) => p.$l || "transparent"};
  border-right: 1px solid ${(p) => p.$r || "transparent"};
`;

const Arrow = ({ up, s = 6, c = "#222" }: { up?: boolean; s?: number; c?: string }) => (
  <svg width={s} height={s * 0.6} viewBox="0 0 10 6" fill={c}><path d={up ? "M0 6 5 0l5 6Z" : "M0 0l5 6 5-6Z"} /></svg>
);
const CaseIcon = ({ w = 9 }: { w?: number }) => (
  <svg width={w} height={w * 0.6} viewBox="0 0 10 6"><ellipse cx="5" cy="3" rx="4.700" ry="2.600" fill="#e9a33a" stroke="#dd4b2c" strokeWidth=".8" /><path d="M3 3h4" stroke="#8a5a10" strokeWidth=".9" /></svg>
);
const ActorIcon = ({ s = 9 }: { s?: number }) => (
  <svg width={s} height={s} viewBox="0 0 10 10" stroke="#d8231f" strokeWidth="1.500" fill="#d8231f"><circle cx="5" cy="1.800" r="1" /><path d="M.8 4.500h8.400M5 3v3.300L1.300 9.500M5 6.300l3.700 3.200" fill="none" /></svg>
);
const DiagramIcon = ({ s = 9 }: { s?: number }) => (
  <svg width={s} height={s} viewBox="0 0 10 10"><path d="M.5 .5h6.500l2.500 2.500v6.500h-9Z" fill="#d8ecf8" stroke="#3b9fd0" /><path d="M1.200 1.200h3.300v3.300H1.200z" fill="#e8742e" /><path d="M5 5.500h4v3.500H5z" fill="#e05a4c" /><path d="M3 4.500v2.500h2" stroke="#4a4a4a" strokeWidth=".6" fill="none" /></svg>
);
const DockButtons = () => (
  <svg width="12" height="6" viewBox="0 0 12 6" fill="none" stroke="#222" strokeWidth=".9"><path d="M1.800 .8h2.400v2H1.800ZM.6 2.800h2.400v2.200h-2.400Z" /><path d="M8.500 1l3.300 3.600M11.800 1 8.500 4.600" /></svg>
);

const useCases: [string, number, number, number, number, number][] = [
  ["Create Event", 1291, 423, 46, 15, 48], ["Edit Event", 1291, 482, 49, 15.300, 37.500], ["Cancel Event", 1292, 548, 48, 15.600, 49],
  ["View Attenders", 1290.500, 611, 50, 15, 53.500], ["Manage Menu", 1288, 677.300, 50, 15, 51],
];
const links: [number, number, number, number][] = [
  [1084, 437.500, 1245, 437.500], [1084, 482.500, 1242, 482.500], [1085, 493, 1244, 532.500], [1085, 493, 1240, 596.500], [1086, 575.500, 1245, 437.500],
  [1086, 575.500, 1242, 497.500], [1086, 575.500, 1244, 563.500], [1086, 626, 1240, 626], [1086, 638, 1239, 662.500],
];
const Actor = ({ x, y, rx, ry }: { x: number; y: number; rx: number; ry: number }) => (
  <g>
    <path d={`M${x} ${y + ry}v18M${x - rx} ${y + 17.500}h${rx * 2}M${x - rx} ${y + 43.500}L${x} ${y + ry + 18}L${x + rx} ${y + 43.500}`} stroke="#dc6464" strokeWidth="1" fill="none" />
    <ellipse cx={x} cy={y} rx={rx} ry={ry} fill="#ff0" stroke="#e98a3c" strokeWidth="1.200" />
  </g>
);
const Label = ({ x, y, w, children }: { x: number; y: number; w: number; children: string }) => (
  <text x={x - w / 2} y={y} textLength={w} fontFamily="Liberation Sans, sans-serif" fontSize="8.600" fill="#2e2e2e">{children}</text>
);
const UseCaseDiagram = () => (
  <svg width="820" height="431" viewBox="1004 313 820 431">
    <rect x="1084.500" y="354.500" width="343" height="364.500" fill="none" stroke="#868686" strokeWidth="1.300" />
    {links.map((l, i) => <line key={i} x1={l[0]} y1={l[1]} x2={l[2]} y2={l[3]} stroke="#e06a6a" strokeWidth="1" />)}
    <Label x={1251.300} y={378.500} w={155}>Use Case For Event Management System</Label>
    {useCases.map(([n, x, y, rx, ry, w]) => (
      <g key={n}>
        <ellipse cx={x} cy={y} rx={rx} ry={ry} fill="#ff0" stroke="#dd7a36" strokeWidth="1.100" />
        <Label x={x} y={y + 3.300} w={w}>{n}</Label>
      </g>
    ))}
    <Actor x={1051.700} y={437} rx={13.500} ry={9} />
    <Actor x={1055} y={583.500} rx={12.500} ry={8.500} />
    <Label x={1051.500} y={492.500} w={18}>User</Label>
    <Label x={1054.700} y={637} w={52}>Event Planner</Label>
  </svg>
);

const tools: React.ReactNode[] = [
  <svg key="0" width="12" height="12" viewBox="0 0 12 12"><path d="M3 1v9l2.200-2L7 11.500l1.500-.7L6.800 7.500h3Z" fill="#111" /></svg>,
  <svg key="1" width="12" height="12" viewBox="0 0 12 12"><path d="M.5 2h8l3 2v6.500H.5Z" fill="#f3cf3e" stroke="#c8932b" /><path d="M2 5.500l2 3M4 5.500l-2 3M5.500 5.500l1 1.500 1-1.500M9 5.500v3h1.500" stroke="#5a3d00" strokeWidth=".8" fill="none" /></svg>,
  <svg key="2" width="12" height="12" viewBox="0 0 12 12"><path d="M.5 1h6v4h-6ZM6 7.500h5.500v4H6Z" fill="#f2b93b" stroke="#c7402a" strokeWidth=".9" /><path d="M7 3h2.500v4" stroke="#c7402a" fill="none" /></svg>,
  <svg key="3" width="12" height="12" viewBox="0 0 12 12"><path d="M1.500 1.500h9v6l-3 3.500h-6Z" fill="#f3f6f8" stroke="#b9c2c9" strokeDasharray="1.500 1" /><path d="M7.500 11V7.500h3Z" fill="#9db0be" /></svg>,
  <svg key="4" width="12" height="12" viewBox="0 0 12 12"><rect x="1" y="1" width="10" height="10" fill="#fbeeee" stroke="#e2706c" /></svg>,
  <ActorIcon key="5" s={11} />,
  <CaseIcon key="6" w={13} />,
  <svg key="7" width="12" height="12" viewBox="0 0 12 12"><path d="M6 1v10" stroke="#d22d2b" strokeWidth="1.200" /></svg>,
  <svg key="8" width="12" height="12" viewBox="0 0 12 12" stroke="#d22d2b" strokeWidth="1.200" fill="none"><path d="M6 1.500V11M4 4l2-2.700L8 4" /></svg>,
  <svg key="9" width="12" height="12" viewBox="0 0 12 12" stroke="#d22d2b" strokeWidth="1.200" fill="none"><path d="M6 1.500V11" strokeDasharray="2 1.300" /><path d="M4 4l2-2.700L8 4" /></svg>,
  <svg key="10" width="12" height="12" viewBox="0 0 12 12" stroke="#d2502b" strokeWidth="1.200" fill="#f6b95a"><path d="M6 5v6" /><path d="M4 4.500l2-3 2 3Z" /></svg>,
];
const treeItems: [string, string, number][] = [
  ["case", "Cancel Event", 45], ["case", "Create Event", 44.500], ["case", "Edit Event", 35.500], ["actor", "Event Planner", 47.500], ["case", "Manage Menu", 50],
  ["diagram", "use case diagram for Eve...", 91.500], ["actor", "User", 16], ["case", "View Attenders", 53],
];
const debugItems: [string, boolean, number][] = [
  ["umlwidgets", false, 40], ["umbrello", true, 31], ["cppparser", false, 34], ["dialogs", true, 26], ["codeimport", true, 41], ["refactoring", true, 38], ["umlmodel", true, 35],
];

function UmlModeller() {
  return (
    <Modeller>
      <ToolRow>{tools}</ToolRow>
      <ModelBody>
        <Dock>
          <DockTitle $h={11}><Fit s={7.600} w={36}>Stereotypes</Fit><DockButtons /></DockTitle>
          <Panel $h={97} $mb={5}>
            <GridRow $h={16} $head>
              <NameCell><Fit s={8.200} w={22}>Name</Fit><svg width="8" height="7" viewBox="0 0 8 7"><path d="M.5 .5h7L4 6.500Z" fill="none" stroke="#c4c4c4" strokeWidth=".8" /></svg></NameCell>
              <div><Fit s={8.200} w={22}>Usage</Fit></div>
            </GridRow>
            <GridRow $h={10}><div><Fit s={7.900} w={22}>folder</Fit></div><div><Text $s={7.900}>1</Text></div></GridRow>
            <GridRow $h={11}><div><Fit s={7.900} w={31}>datatype</Fit></div><div><Text $s={7.900}>11</Text></div></GridRow>
          </Panel>
          <DockTitle $h={12} $line><Fit s={7.600} w={30}>Tree View</Fit><DockButtons /></DockTitle>
          <Panel $h={96} $mb={4}>
            <TreeWrap>
              <TreeRows>
                <TreeRow $in={13}>
                  <svg width="17" height="9" viewBox="0 0 17 9"><path d="M.5 2h5v5h-5ZM1.500 4.500h3" fill="none" stroke="#a8a8a8" strokeWidth=".8" /><path d="M8.500 1h4l1 1.500h3.500V8.500H8.500Z" fill="#8c8c8c" /></svg>
                  <Fit s={8} w={51}>Use Case View</Fit>
                </TreeRow>
                {treeItems.map(([k, n, w]) => (
                  <TreeRow key={n} $in={31.500}>
                    {k === "case" ? <CaseIcon /> : k === "actor" ? <ActorIcon /> : <DiagramIcon />}
                    <Fit s={8} w={w}>{n}</Fit>
                  </TreeRow>
                ))}
              </TreeRows>
              <MiniScroll $w={11}><ScrollBtn><Arrow up /></ScrollBtn><ScrollHandle $top={34} $bottom={0} /><ScrollBtn><Arrow /></ScrollBtn></MiniScroll>
            </TreeWrap>
          </Panel>
          <DockTitle $h={12} $line><Fit s={7.600} w={18}>Debug</Fit><DockButtons /></DockTitle>
          <Panel $h={96} $mb={5}>
            <HeadCell><Fit s={8.200} w={41}>Class Name</Fit></HeadCell>
            {debugItems.map(([n, on, w], i) => (
              <TreeRow key={n} $in={2.500} $alt={i % 2 === 1}>
                <svg width="17" height="8" viewBox="0 0 17 8" fill="none" strokeWidth=".8">
                  <path d="M1 2h4v4H1ZM1.500 4h3M3 2.500v3M5.500 4h3" stroke="#9a9a9a" />
                  <rect x="9.500" y="1" width="6" height="6" stroke="#4a4a4a" fill="#fff" />
                  {on && <path d="m10.800 3.800 1.400 1.700 2.300-3.200" stroke="#111" strokeWidth="1.200" />}
                </svg>
                <Fit s={8} w={w}>{n}</Fit>
              </TreeRow>
            ))}
          </Panel>
          <DockTitle $h={11} $line><Fit s={7.600} w={44}>Documentation</Fit><DockButtons /></DockTitle>
          <DocRow><DiagramIcon s={8} /><DocName><Fit s={7.600} w={121}>use case diagram for Event Management</Fit></DocName><Box $w={7} $h={7} /></DocRow>
          <Panel $h={72} />
          <DockTabs>
            <DockTab $w={57} $on><Fit s={7.600} w={44}>Documentation</Fit></DockTab>
            <DockTab $w={67}><Fit s={7.600} w={52}>Command history</Fit></DockTab>
            <DockTab $w={24}><Fit s={7.600} w={10}>Log</Fit></DockTab>
          </DockTabs>
        </Dock>
        <Work>
          <WorkTabs>
            <svg width="14" height="10" viewBox="0 0 14 10"><path d="M3 2h6v5H3Z" fill="#f8f2d8" /><path d="M2 1l3 2" stroke="#e8b53a" strokeWidth="1.500" /><path d="M8 7h3M10 6v3" stroke="#222" /></svg>
            <WorkTab>
              <DiagramIcon s={10} />
              <Fit s={7.600} w={121}>use case diagram for Event Management</Fit>
              <svg width="8" height="8" viewBox="0 0 8 8"><rect width="8" height="8" rx="1" fill="#dc5f3e" /><path d="m2.500 2.500 3 3M5.500 2.500l-3 3" stroke="#fff" /></svg>
            </WorkTab>
          </WorkTabs>
          <CanvasRow>
            <UseCaseDiagram />
            <MiniScroll $w={14}><ScrollBtn><Arrow up /></ScrollBtn><ScrollHandle $top={167} $bottom={22} /><ScrollBtn><Arrow /></ScrollBtn></MiniScroll>
          </CanvasRow>
        </Work>
      </ModelBody>
      <StatusRow>
        <StatusCell $w={24} $l="#a0a0a0" $r="#d8d8d8"><Fit s={8.500} w={22}>Ready.</Fit></StatusCell>
        <StatusCell $w={439} />
        <StatusCell $w={366} $l="#b5b5b5" />
        <StatusCell $w={29}><Fit s={8} w={19}>107%</Fit></StatusCell>
        <StatusCell $w={16} $r="#bdbdbd"><Fit s={8} w={9}>Fit</Fit></StatusCell>
        <StatusCell $w={27} $r="#8a8a8a"><Fit s={8} w={19}>100%</Fit></StatusCell>
        <StatusCell $w={20} $r="#bdbdbd"><PillSearch s={8} c="#93b2c6" /></StatusCell>
        <StatusCell $w={55}><svg width="52" height="16" viewBox="0 0 52 16"><path d="M1 7h8M15 7h36" stroke="#8a8a8a" strokeWidth="1.200" /><path d="M10 14h4V0" stroke="#6a6a6a" fill="none" /></svg></StatusCell>
        <StatusCell $w={18} $l="#bdbdbd"><PillSearch s={8} c="#93b2c6" /></StatusCell>
      </StatusRow>
    </Modeller>
  );
}

/* ---------- taskbars ---------- */

const Bar = styled.div<{ $h: number; $bg: string; $pl: number; $c: string }>`
  height: ${(p) => p.$h}px;
  display: flex;
  align-items: center;
  background: ${(p) => p.$bg};
  padding-left: ${(p) => p.$pl}px;
  color: ${(p) => p.$c};
`;
const DesktopBar = styled(Bar)`
  height: 72px;
  border-top: 2px solid #47484a;
`;
const Lines = styled.div<{ $w: number; $ml?: number; $a?: string; $h: number; $mb?: number }>`
  width: ${(p) => p.$w}px;
  margin-left: ${(p) => p.$ml || 0}px;
  margin-bottom: ${(p) => p.$mb || 0}px;
  flex: none;
  display: flex;
  flex-direction: column;
  align-items: ${(p) => p.$a || "flex-start"};
  > span { line-height: ${(p) => p.$h}px; }
`;
const Pill = styled.div<{ $w: number; $h: number; $ml: number; $bg: string; $b: string; $pl: number; $gap: number }>`
  width: ${(p) => p.$w}px;
  height: ${(p) => p.$h}px;
  margin-left: ${(p) => p.$ml}px;
  padding: 0 8px 0 ${(p) => p.$pl}px;
  flex: none;
  display: flex;
  align-items: center;
  gap: ${(p) => p.$gap}px;
  border: 1px solid ${(p) => p.$b};
  border-radius: ${(p) => p.$h / 2}px;
  background: ${(p) => p.$bg};
`;
const DeskPill = styled(Pill)`
  margin-bottom: 2px;
`;
const Active = styled(Spot)<{ $h: number; $bg: string; $r: number }>`
  height: ${(p) => p.$h}px;
  border-radius: ${(p) => p.$r}px;
  background: ${(p) => p.$bg};
`;
const Dot = styled.i<{ $w: number; $h: number; $b: number; $c: string }>`
  position: absolute;
  bottom: ${(p) => p.$b}px;
  left: 50%;
  width: ${(p) => p.$w}px;
  height: ${(p) => p.$h}px;
  transform: translateX(-50%);
  border-radius: 3px;
  background: ${(p) => p.$c};
`;
const Badge = styled.span<{ $t: number; $r: number; $w: number; $h?: number; $bg: string; $c?: string; $fs?: number }>`
  position: absolute;
  top: ${(p) => p.$t}px;
  right: ${(p) => p.$r}px;
  width: ${(p) => p.$w}px;
  height: ${(p) => p.$h || p.$w}px;
  border-radius: 50%;
  background: ${(p) => p.$bg};
  color: ${(p) => p.$c || "#fff"};
  font-size: ${(p) => p.$fs || 8}px;
  line-height: 1;
  display: flex;
  align-items: center;
  justify-content: center;
`;
const LetterTile = styled.div`
  width: 36px;
  height: 36px;
  background: #1c3fae;
  color: #fff;
  font: 600 27px/32px ${UI};
  text-align: center;
  text-shadow: -2px 1px 0 #0f6b74;
`;
const HpTile = styled.div`
  width: 17px;
  height: 17px;
  display: flex;
  align-items: center;
  justify-content: center;
  background: #0a96d6;
  font-style: italic;
`;

const PhotoBar = () => (
  <Bar $h={34} $pl={15} $c="#222" $bg="linear-gradient(90deg,#ecdbd4 0,#e8d9cf 15%,#f0dfd2 30%,#ecdcd4 55%,#f0dfd5 70%,#e6dcd7 90%,#e0dedd 100%)">
    <Spot $w={18}>
      <svg width="18" height="19" viewBox="0 0 18 19"><circle cx="9" cy="11" r="6.500" fill="url(#gSun)" /><path d="M0 11h10M3 14h13M1 17h10" stroke="#f6d9b6" strokeWidth="1" /></svg>
      <Badge $t={-3.500} $r={0} $w={11} $bg="#c4281c">1</Badge>
    </Spot>
    <Lines $w={40} $ml={4} $h={11.500} $mb={2}><Fit s={8.800} w={16.500}>90°F</Fit><Fit s={8.800} w={19} c="#666">Haze</Fit></Lines>
    <Spot $w={17} $ml={361}><WinLogo s={17} dark /></Spot>
    <Pill $w={154} $h={22} $ml={10} $bg="#f9f3ef" $b="#efe3dc" $pl={6} $gap={8}><PillSearch s={11} c="#333" flip /><Fit s={12} w={38} c="#5f5b59">Search</Fit></Pill>
    <Spot $w={16} $ml={10}><TaskViewIcon s={16} dark /></Spot>
    <Spot $w={16} $ml={15}><TeamsIcon s={16} /></Spot>
    <Spot $w={16} $ml={16}><EdgeIcon s={17} hole="#dcebf2" /><Dot $w={4} $h={2} $b={-5} $c="#8a8785" /></Spot>
    <Spot $w={16} $ml={15}><StoreIcon s={16} dark /></Spot>
    <Spot $w={16} $ml={15}><Disc $d={15} $bg="#1193cf" $fs={12}><b>?</b></Disc><Badge $t={-4} $r={-3} $w={11} $bg="#fcb414" /></Spot>
    <Spot $w={16} $ml={15}><FolderIcon s={17} /><Dot $w={4} $h={2} $b={-5} $c="#8a8785" /></Spot>
    <Active $w={27} $ml={10} $h={27} $bg="#f8efea" $r={3}><ChromeIcon s={17} /><Badge $t={1} $r={1} $w={11} $bg="#6a9f3a">d</Badge><Dot $w={12} $h={2.500} $b={-1} $c="#f7630c" /></Active>
    <Spot $w={18} $ml={9}>
      <svg width="18" height="18" viewBox="0 0 18 18"><path d="M9 1a8 8 0 1 1-4 15l-4 1.300L2.200 13A8 8 0 0 1 9 1Z" fill="#fff" stroke="#1a8f54" strokeWidth="2" /><path d="M6 5.500c-1 3 3.500 7 6.500 6.500l.5-1.500-2-1-1 1c-1-.4-2-1.500-2.500-2.500l.8-.8L7.500 5.200Z" fill="#1a8f54" /></svg>
      <Badge $t={-4} $r={-5} $w={15} $h={12} $bg="#f7630c" $fs={9.500}>13</Badge><Dot $w={4} $h={2} $b={-4} $c="#8a8785" />
    </Spot>
    <Spot $w={17} $ml={14}><HpTile><Fit s={7.500} w={14} c="#fff">myhp</Fit></HpTile></Spot>
    <Spot $w={17} $ml={14}><WindowIcon s={17} /><Dot $w={4} $h={2} $b={-4.500} $c="#8a8785" /></Spot>
    <Spot $w={10} $ml={255}><ChevronUp s={9} c="#333" /></Spot>
    <Lines $w={28} $ml={5} $a="center" $h={11} $mb={1}><Fit s={8.800} w={17}>ENG</Fit><Fit s={8.800} w={9}>IN</Fit></Lines>
    <Spot $w={11} $ml={8}><WifiIcon s={11} c="#333" /></Spot>
    <Spot $w={11} $ml={5}><SpeakerIcon s={11} c="#333" /></Spot>
    <Spot $w={12} $ml={6}><BatteryIcon s={12} c="#222" /></Spot>
    <Lines $w={51} $ml={4} $a="flex-end" $h={11.500} $mb={1}><Fit s={8.800} w={20}>12:56</Fit><Fit s={8.800} w={44.500}>22-02-2024</Fit></Lines>
    <Spot $w={11} $ml={6}><Disc $d={11} $bg="#f7630c" $fs={8}>3</Disc></Spot>
  </Bar>
);

const NestedBar = () => (
  <Bar $h={32} $pl={7} $c="#333" $bg="linear-gradient(90deg,#dce8f5 0,#e1ecf8 12%,#dde9f7 22%,#d0dffa 32%,#d8dcf2 46%,#d5e2fb 56%,#d3dbf0 74%,#dedfe4 84%,#e2e2e3 100%)">
    <Spot $w={15}><WidgetIcon s={15} /></Spot>
    <Spot $w={15} $ml={281}><WinLogo s={15} dark /></Spot>
    <Pill $w={141} $h={21} $ml={9} $bg="#f2f5fd" $b="#e6ebf7" $pl={6} $gap={6}><PillSearch s={9.500} c="#333" /><Fit s={9} w={28} c="#5f6368">Search</Fit></Pill>
    <Spot $w={16} $ml={9}><CopilotIcon s={15} /></Spot>
    <Spot $w={16} $ml={11}><TaskViewIcon s={15} dark /></Spot>
    <Spot $w={15} $ml={13}><TeamsIcon s={14.500} /></Spot>
    <Spot $w={16} $ml={14}><ChromeIcon s={15.500} /><Badge $t={-3} $r={-3} $w={10} $bg="#8d6e63" $fs={7}>m</Badge><Dot $w={4} $h={2} $b={-5} $c="#8a8d95" /></Spot>
    <Spot $w={16} $ml={12}><FolderIcon s={16} /><Dot $w={4} $h={2} $b={-4.500} $c="#8a8d95" /></Spot>
    <Spot $w={16} $ml={12}><EdgeIcon s={15.500} hole="#d5e6f8" /></Spot>
    <Spot $w={16} $ml={13}><StoreIcon s={15.500} dark /></Spot>
    <Active $w={24} $ml={8} $h={24} $bg="#eef3fb" $r={3}><WindowIcon s={15} /><Dot $w={9} $h={2} $b={0} $c="#0f6cbd" /></Active>
    <Spot $w={8} $ml={109}><ChevronUp s={7.500} c="#333" /></Spot>
    <Spot $w={12} $ml={11}><svg width="12" height="12" viewBox="0 0 12 12"><path d="M6 1a4 4 0 0 1 4 3.500q2 .5 2 2.500T9 9.500H3.500Q0 9 0 6t2.500-3Q4 1 6 1Z" fill="#4c4f55" /><circle cx="8" cy="8" r="3.400" fill="#8cc4ee" stroke="#fff" strokeWidth=".6" /></svg></Spot>
    <Lines $w={26} $ml={6} $a="center" $h={10}><Fit s={8} w={15.500}>ENG</Fit><Fit s={8} w={8}>IN</Fit></Lines>
    <Spot $w={10} $ml={6}><WifiIcon s={10} c="#444" /></Spot>
    <Spot $w={11} $ml={5}><SpeakerIcon s={10} c="#444" /></Spot>
    <Spot $w={11} $ml={5}><BatteryIcon s={11} c="#333" /></Spot>
    <Lines $w={44} $ml={6} $a="flex-end" $h={10} $mb={2}><Fit s={8.200} w={19}>13:06</Fit><Fit s={8.200} w={40.500}>21-02-2024</Fit></Lines>
    <Spot $w={9} $ml={6}><BellIcon w={8.500} c="#0f4fa8" /></Spot>
  </Bar>
);

const SearchArt = () => (
  <svg width="69" height="40" viewBox="0 0 69 40">
    <path d="M0 31h69q-2 6-12 8H14Q3 37 0 31Z" fill="#c98f4c" /><path d="M0 30.500h69l-2 3H3Z" fill="#f0c585" />
    <rect x="8" y="20.500" width="8" height="12" rx="1" fill="#f3dfbe" /><path d="M12 14q3.500 4 0 6.500Q9 18 12 14Z" fill="#ff8a1e" />
    <path d="M21 20h13l-1 12H22Z" fill="#d2722c" />
    <path d="M27.500 21Q20 14 17.500 7M27.500 21Q24 8 21 4M27.500 21Q28 8 31 1M27.500 21Q31 9 37 3M27.500 21q4-8 11-9M27.500 21Q22 15 16 14.500" stroke="#7db526" strokeWidth="2.300" strokeLinecap="round" fill="none" />
    <path d="M49 6l15 10v15" stroke="#c8b69c" strokeWidth="1.800" fill="none" /><circle cx="64" cy="16" r="2.500" fill="#a4937c" />
    <path d="M38 20q0-9 11-14l3 8q-2 4-3 8-6-4-11-2Z" fill="#d9cbb8" /><path d="M57 32q1-3 7-3t5 3Z" fill="#d9cbb8" />
  </svg>
);

const Desktop = () => (
  <DesktopBar $h={72} $pl={29} $c="#f3f3f3" $bg="linear-gradient(90deg,#202326 0,#242628 18%,#222220 27%,#1d2325 38%,#202122 52%,#1f2022 70%,#222326 100%)">
    <Spot $w={36}>
      <svg width="36" height="40" viewBox="0 0 36 40">
        <circle cx="18" cy="25" r="15" fill="url(#gSun)" />
        <path d="M4 20q-4-1-4-4.500Q0 12 4.500 11.500 6 7.500 10.500 7.500T17 12q5 1 5 4.500T19 20Z" fill="url(#gCloud)" />
        <path d="M18 39q-3.500-1-3.500-4t4-4q1.500-4.500 6.500-4.500t6 4.500q5 .5 5 4t-3.500 4Z" fill="url(#gCloud)" />
      </svg>
      <Badge $t={-1} $r={-5} $w={24} $bg="#ff99a4" $c="#1b1b1b" $fs={14.500}>1</Badge>
    </Spot>
    <Lines $w={141} $ml={11} $h={24.500} $mb={3}><Fit s={16.500} w={35} c="#fff">80°F</Fit><Fit s={16.500} w={98} c="#c5c6c7">Partly sunny</Fit></Lines>
    <Spot $w={34} $ml={255}><WinLogo s={34} /></Spot>
    <DeskPill $w={330} $h={48} $ml={21} $bg="linear-gradient(90deg,#3f4243,#343b3e 50%,#3d3f40)" $b="#55585a" $pl={17} $gap={15}>
      <PillSearch s={22} c="#dedede" /><Fit s={20.500} w={62} c="#cfd1d2">Search</Fit><Group><SearchArt /></Group>
    </DeskPill>
    <Spot $w={36} $ml={18}><TaskViewIcon s={36} /></Spot>
    <Spot $w={34} $ml={30}><TeamsIcon s={34} /></Spot>
    <Spot $w={36} $ml={32}><FolderIcon s={36} /><Dot $w={9} $h={5} $b={-11} $c="#9b9b9b" /></Spot>
    <Spot $w={36} $ml={30}>
      <EdgeIcon s={36} />
      <Badge $t={19} $r={19} $w={17} $bg="#cfcfcf"><svg width="11" height="12" viewBox="0 0 11 12" fill="#777"><circle cx="5.500" cy="3" r="3" /><path d="M0 12q0-5 5.500-5t5.500 5Z" /></svg></Badge>
    </Spot>
    <Spot $w={36} $ml={30}><LetterTile>L</LetterTile><Badge $t={-8} $r={-8} $w={24} $bg="#4cc2ff" $c="#111" $fs={14.500}>1</Badge></Spot>
    <Spot $w={35} $ml={30}><StoreIcon s={35} /></Spot>
    <Spot $w={32} $ml={33}><PhotosIcon /><Dot $w={9} $h={5} $b={-12} $c="#9b9b9b" /></Spot>
    <Active $w={60} $ml={20} $h={60} $bg="#303134" $r={7}>
      <ChromeIcon s={36} />
      <Badge $t={5} $r={4} $w={24} $bg="#f3b3c1"><svg width="22" height="10" viewBox="0 0 22 10"><circle cx="5.500" cy="5" r="4.500" fill="#6b5a5e" stroke="#d9c4ca" /><circle cx="16.500" cy="5" r="4.500" fill="#6b5a5e" stroke="#d9c4ca" /><path d="M10 4h2" stroke="#d9c4ca" /></svg></Badge>
      <Dot $w={24} $h={5} $b={1} $c="#4cc2ff" />
    </Active>
    <Spot $w={16} $ml={38}><ChevronUp s={16} c="#fff" /></Spot>
    <Spot $w={24} $ml={28}>
      <svg width="24" height="20" viewBox="0 0 24 20"><path d="M5 18q-5-1-5-5t4.500-4.500Q6 2 12 2t7 5q5 1 5 5.500T19 18Z" fill="#8b8b8b" /><path d="M3 1l19 18" stroke="#202123" strokeWidth="4" /><path d="M4 1l18 18" stroke="#e8e8e8" strokeWidth="1.500" /></svg>
    </Spot>
    <Lines $w={52} $ml={19} $a="center" $h={23}><Fit s={17} w={35}>ENG</Fit><Fit s={17} w={18}>IN</Fit></Lines>
    <Spot $w={24} $ml={19}><WifiIcon s={24} c="#fff" /></Spot>
    <Spot $w={23} $ml={12}><SpeakerIcon s={23} c="#fff" /></Spot>
    <Spot $w={24} $ml={13}><BatteryIcon s={25} c="#fff" /></Spot>
    <Lines $w={100} $ml={18} $a="flex-end" $h={24} $mb={2}><Fit s={17} w={44}>06:50</Fit><Fit s={17} w={93}>23-02-2024</Fit></Lines>
    <Spot $w={20} $ml={13}><BellIcon w={20} c="#8ce8ff" /></Spot>
    <Spot $w={36} $ml={26}><CopilotIcon s={35} /></Spot>
  </DesktopBar>
);

/* ---------- page scrollbar ---------- */

const PageScroll = styled.div`
  width: 25px;
  flex: none;
  background: #424242;
  display: flex;
  flex-direction: column;
  align-items: center;
`;
const PageThumb = styled.div`
  width: 21px;
  height: 684px;
  margin: 180px 0 27px;
  background: #686868;
`;
const PageArrow = styled.div`padding-right: 1px;`;

const darkFiles: [string, number][] = [
  ["ER- event management.png", 258], ["README.md", 116], ["activty-event magement.png", 266], ["communication-- event mageme...", 320],
  ["component diagram - event man...", 322], ["deployement -- event magement...", 323], ["sequence diagram -- event mage...", 323], ["use case _-event management.png", 321],
];
const lightFiles: [string, number][] = [["activity - event mangement.png", 197.500], ["use case - event management.jpg", 208]];

const X_PATH = "M3 3l10 10M13 3L3 13";

export default function App() {
  return (
    <>
      <Global />
      <GradientDefs />
      <Page>
        <Upper>
          <DarkSidebar><Shifted><Navigator t={darkNav} files={darkFiles} /></Shifted></DarkSidebar>
          <Viewer>
            <PrevBox />
            <BlobBox>
              <BlobHeader>
                <Fit s={16.500} w={60} c="#848d97" f={MONO} pt={2}>565 KB</Fit>
                <Group $ml={48} $gap={6}>
                  <Oct n="copilot" s={24} c="#848d97" />
                  <Fit s={18.600} w={302} wt={600} c="#e6edf3" pt={3}>Code 55% faster with GitHub Copilot</Fit>
                </Group>
                <Group $gap={12}>
                  <BtnGroup $bg="#21262d" $b="#363b42" $r={9} $h={42}><BtnPart $w={40}><Oct n="download" s={24} c="#c9d1d9" /></BtnPart></BtnGroup>
                  <BtnGroup $bg="#21262d" $b="#363b42" $r={9} $h={42}>
                    <BtnPart $w={40} $b="#363b42"><Oct n="pencil" s={24} c="#c9d1d9" /></BtnPart>
                    <BtnPart $w={40}><Oct n="caret" s={24} c="#c9d1d9" /></BtnPart>
                  </BtnGroup>
                </Group>
              </BlobHeader>

              <TabStrip>
                <TabCell $w={27} $ml={6}><TabMenu><Stroke w={9} d="M2 5l6 6 6-6" sw={2.800} /></TabMenu></TabCell>
                <TabCell $w={227} $ml={15}>
                  <Oct n="github" s={16} c="#24292f" />
                  <Spot $w={112} $ml={8}><Fit s={10} w={112} c="#4d3238">Manojdmk/OOAD-CSA1143</Fit></Spot>
                  <Spot $w={9} $ml={68}><Stroke w={11} d={X_PATH} sw={2.300} /></Spot>
                </TabCell>
                <TabRule />
                <TabCell $w={213} $ml={-14}>
                  <Spot $w={15} $ml={1}><Globe /></Spot>
                  <Spot $w={46} $ml={7}><Fit s={10} w={46} c="#4d3238">github.com</Fit></Spot>
                  <Spot $w={9} $ml={134}><Stroke w={11} d={X_PATH} sw={2.300} /></Spot>
                </TabCell>
                <ActiveTab $w={233} $ml={15}>
                  <Oct n="github" s={16} c="#24292f" />
                  <Fade $w={166} $ml={8}><Fit s={10} w={190} c="#3f3337">CSA1143-OOAD/use case - event management</Fit></Fade>
                  <Spot $w={9}><Stroke w={11} d={X_PATH} sw={2.300} /></Spot>
                  <Spot $w={11} />
                </ActiveTab>
                <TabCell $w={12} $ml={14}><Stroke w={11} d="M8 1v14M1 8h14" sw={2.200} /></TabCell>
                <TabCell $w={11} $ml={469}><Stroke w={11} d="M0 8h16" sw={1.300} /></TabCell>
                <TabCell $w={11} $ml={34}><Stroke w={10} d="M1 5q0-1 1-1h9q1 0 1 1v9q0 1-1 1H2q-1 0-1-1ZM5 1h7q3 0 3 3v8" sw={1.400} /></TabCell>
                <TabCell $w={11} $ml={35}><Stroke w={11} d="M1 1l14 14M15 1L1 15" sw={1.300} /></TabCell>
              </TabStrip>
              <AddressWrap>
                <AddressRow>
                  <Spot $w={14}><Stroke w={13} d="M15 8H2M8 1.500 1.500 8 8 14.500" sw={2} /></Spot>
                  <Spot $w={14} $ml={21}><Stroke w={13} d="M1 8h13M8 1.500 14.500 8 8 14.500" c="#b39aa0" sw={2} /></Spot>
                  <Spot $w={14} $ml={23}><Stroke w={13} d="M13.500 10.500A6.200 6.200 0 1 1 13 4.500M14.300 1v5.200H9" sw={2} /></Spot>
                  <UrlBar>
                    <Disc $d={25} $bg="#ffdee4"><Stroke w={13} d="M3.500 2.500a2 2 0 1 1 0 4 2 2 0 0 1 0-4ZM8 4.500h7M1 11.500h7M12.500 9.500a2 2 0 1 1 0 4 2 2 0 0 1 0-4Z" sw={1.800} /></Disc>
                    <Group $ml={8}>
                      <Fit s={13.300} w={70} c="#33282b" pt={1}>github.com</Fit>
                      <Fit s={13.300} w={563} c="#6f5f63" pt={1}>/avinash0987/CSA1143-OOAD/blob/main/use%20case%20-%20event%20management.jpg</Fit>
                    </Group>
                    <Group $gap={16}>
                      <Stroke w={17} d="M8 2H2q-1 0-1 1v8q0 1 1 1h12q1 0 1-1V9M5 14h6M12.500 1v6M10 5l2.500 2.500L15 5" c="#5b4e51" sw={1.500} />
                      <Stroke w={15} d="M8 1.200l2 4.700 5 .4-3.800 3.300 1.200 5L8 12l-4.400 2.600 1.200-5L1 6.300l5-.4Z" c="#4f4346" sw={1.400} />
                    </Group>
                  </UrlBar>
                  <Spot $w={18} $ml={19}><Stroke w={18} d="M2 4h4q-.5-2.500 1.500-2.500T9 4h4v4q2.500-.5 2.500 1.200T13 10.500V14.500H2v-3.500q2-.3 2-1.800T2 7.500Z" sw={1.700} /></Spot>
                  <Spot $w={2} $ml={15}><Stroke w={2} h={16} vb="0 0 2 16" d="M1 0v16" c="#ffacbb" sw={1.600} /></Spot>
                  <Spot $w={16} $ml={19}><Stroke w={15} d="M1.500 2h13v12h-13ZM9.500 2h5v12h-5ZM11 2v12M13 2v12" sw={1.800} /></Spot>
                  <Spot $w={21} $ml={18}><Disc $d={21} $bg="#67a036" $fs={12}>d</Disc></Spot>
                  <Spot $w={6} $ml={22}><svg width="4" height="15" viewBox="0 0 4 15" fill="#2b2326"><circle cx="2" cy="2" r="1.700" /><circle cx="2" cy="7.500" r="1.700" /><circle cx="2" cy="13" r="1.700" /></svg></Spot>
                </AddressRow>
              </AddressWrap>

              <BrowserBody>
                <LightSidebar><Navigator t={lightNav} files={lightFiles} /></LightSidebar>
                <LightViewer>
                  <LightBar $h={45} $b={1} $pl={16}>
                    <Fit s={14} w={99.500} wt={600} c="#1c74e0">CSA1143-OOAD</Fit>
                    <Spot $w={13}><Text $s={14} $c="#656d76">/</Text></Spot>
                    <Fit s={14} w={213} c="#24292f">use case - event management.jpg</Fit>
                    <Group $gap={3}><Oct n="up" s={15} c="#656d76" /><Fit s={12} w={20} c="#24292f">Top</Fit><Spot $w={7} /></Group>
                  </LightBar>
                  <LightBar $h={45} $b={2} $pl={8}>
                    <Fit s={10.800} w={40} c="#6e7781" f={MONO}>144 KB</Fit>
                    <Group $ml={32} $gap={5}><Oct n="copilot" s={16} c="#57606a" /><Fit s={12} w={201} c="#2c3137" pt={2}>Code 55% faster with GitHub Copilot</Fit></Group>
                    <Group $gap={7}>
                      <BtnGroup $bg="#f7f9fb" $b="#dde1e6" $r={6} $h={29}><BtnPart $w={27}><Oct n="download" s={16} c="#24292f" /></BtnPart></BtnGroup>
                      <BtnGroup $bg="#f7f9fb" $b="#dde1e6" $r={6} $h={29}>
                        <BtnPart $w={27} $b="#dde1e6"><Oct n="pencil" s={16} c="#24292f" /></BtnPart>
                        <BtnPart $w={26}><Oct n="caret" s={16} c="#24292f" /></BtnPart>
                      </BtnGroup>
                    </Group>
                  </LightBar>
                  <UmlModeller />
                  <NestedBar />
                </LightViewer>
                <LightScroll>
                  <Arrow up s={8} c="#505050" />
                  <LightThumb />
                  <Arrow s={8} c="#8b8b8b" />
                  <Assistant>
                    <svg width="25" height="24" viewBox="0 0 25 24">
                      <path d="M12 3v18q-1 3-4.500 2.500T4 20.500Q1 20 1.500 16.500-1.500 13 1 8.500 1.500 5 4.500 4 6 0 9.500.8 12 1.200 12 3ZM13 3v18q1 3 4.500 2.500t3.500-3q3-.5 2.500-4 3-3.500.5-8Q23.500 5 20.500 4 19 0 15.500.8 13 1.200 13 3Z" fill="url(#gBrain)" />
                      <path d="M2 12h9M5 7.500q3 1 5-1M5 17q2-1.500 5 1M15 7l1.500-3L18 7M15.500 10h4M17.500 10v4M15 18h5" stroke="#fff" strokeWidth="1.200" fill="none" />
                    </svg>
                  </Assistant>
                </LightScroll>
              </BrowserBody>
              <PhotoBar />
            </BlobBox>
          </Viewer>
          <PageScroll><PageThumb /><PageArrow><Arrow s={12} c="#fff" /></PageArrow></PageScroll>
        </Upper>
        <Desktop />
      </Page>
    </>
  );
}
